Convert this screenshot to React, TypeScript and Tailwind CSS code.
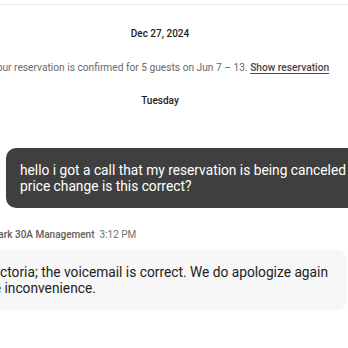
export default function App() {
  return (
    <div className="w-[348px] h-[348px] overflow-hidden bg-white font-['Roboto',sans-serif] text-[#222222]">
      <div className="h-[4px]" />
      <div className="border-t border-[#ebebeb]" />
      <div className="ml-[-60px] w-[440px] flex flex-col">
        <div className="pt-[22px] text-center text-[10px] font-medium leading-[14px]">Dec 27, 2024</div>

        <p className="mt-[20px] text-center text-[10.2px] leading-[14px] text-[#6a6a6a] whitespace-nowrap">
          Your reservation is confirmed for 5 guests on Jun 7 – 13.{' '}
          <span className="font-medium text-[#484848] underline underline-offset-2">Show reservation</span>
        </p>

        <div className="mt-[19px] text-center text-[10px] font-medium leading-[14px]">Tuesday</div>

        <div className="mt-[40px] pl-[66px]">
          <div className="w-[423px] rounded-[10px] bg-[#3f3f3f] px-[14px] py-[14px] text-[13.75px] leading-[16px] text-white">
            hello i got a call that my reservation is being canceled due to a price change is this correct?
          </div>
        </div>

        <div className="mt-[20px] flex items-baseline gap-[5px] pl-[52px] text-[10px] leading-[14px]">
          <span className="font-medium text-[#5e5e5e]">Park 30A Management</span>
          <span className="text-[#717171]">3:12 PM</span>
        </div>

        <div className="mt-[8px] pl-[7px]">
          <div className="w-[400px] rounded-[10px] bg-[#f7f7f7] py-[14px] pl-[14px] pr-[8px] text-[13.75px] leading-[16px]">
            Hey Victoria; the voicemail is correct. We do apologize again for the inconvenience.
          </div>
        </div>
      </div>
    </div>
  );
}
